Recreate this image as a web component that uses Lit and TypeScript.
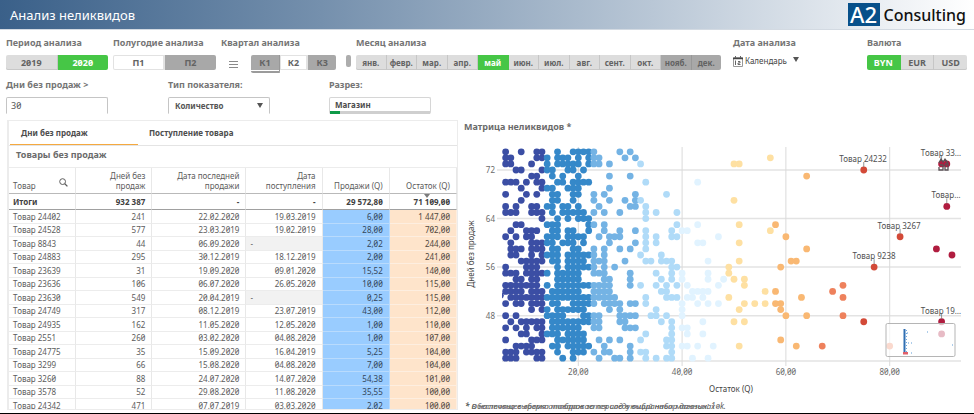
import { LitElement, html, svg, css } from "lit";
import { customElement, state } from "lit/decorators.js";
import { classMap } from "lit/directives/class-map.js";

type Option = { label: string; kind?: string };

const opt = (label: string, kind = "plain"): Option => ({ label, kind });

const YEARS = [opt("2019"), opt("2020", "on")];
const HALVES = [opt("П1", "white"), opt("П2", "dark")];
const QUARTERS = [opt("К1", "dark under"), opt("К2", "white"), opt("К3", "dark")];
const MONTHS = [
  opt("янв."), opt("февр."), opt("мар."), opt("апр."), opt("май", "on"), opt("июн."),
  opt("июл."), opt("авг."), opt("сент."), opt("окт."), opt("нояб.", "dark"), opt("дек.", "dark"),
];
const CURRENCIES = [opt("BYN", "on"), opt("EUR"), opt("USD")];

const ROWS: string[][] = [
  ["Товар 24402", "241", "22.02.2020", "19.03.2019", "6,00", "1 447,00"],
  ["Товар 24528", "577", "23.03.2019", "19.02.2019", "28,00", "702,00"],
  ["Товар 8843", "44", "06.09.2020", "-", "2,02", "244,00"],
  ["Товар 24883", "295", "30.12.2019", "18.12.2019", "2,00", "241,00"],
  ["Товар 23639", "31", "19.09.2020", "09.01.2020", "15,52", "140,00"],
  ["Товар 23636", "106", "06.07.2020", "26.05.2020", "10,00", "115,00"],
  ["Товар 23630", "549", "20.04.2019", "-", "0,25", "115,00"],
  ["Товар 24749", "317", "08.12.2019", "23.07.2019", "43,00", "112,00"],
  ["Товар 24935", "162", "11.05.2020", "12.05.2020", "1,00", "110,00"],
  ["Товар 2551", "260", "03.02.2020", "04.08.2020", "1,00", "107,00"],
  ["Товар 24775", "35", "15.09.2020", "16.04.2019", "5,25", "104,00"],
  ["Товар 3299", "66", "15.08.2020", "04.08.2020", "7,00", "104,00"],
  ["Товар 3260", "88", "24.07.2020", "14.07.2020", "54,38", "101,00"],
  ["Товар 3578", "52", "29.08.2020", "11.08.2020", "35,55", "100,00"],
  ["Товар 24342", "471", "07.07.2019", "03.03.2020", "2,02", "100,00"],
];

// Days without sales -> stock values present on that line.
const POINTS: Record<number, number[]> = {
  75: [6, 9, 12, 13, 16, 19, 20, 21, 22, 23, 28, 30],
  74: [6, 7, 12, 13, 14, 16, 17, 18, 20, 22, 23, 24, 29, 31, 57],
  73: [6, 7, 11, 14, 16, 17, 18, 19, 20, 22, 23, 24, 26, 32, 50, 51, 90, 91],
  72: [8, 9, 13, 14, 15, 18, 19, 21, 75],
  71: [11, 12, 15, 17, 20, 26, 30, 64],
  70: [6, 7, 8, 10, 12, 13, 16, 17, 19, 20, 21, 22, 33, 43],
  69: [9, 13, 14, 15, 18, 19, 20, 26],
  68: [6, 10, 12, 15, 16, 19, 20, 23, 25, 31, 37],
  67: [9, 15, 16, 19, 23, 26, 29, 31, 32, 50],
  66: [6, 8, 11, 12, 14, 15, 17, 18, 20, 24, 30, 31, 33, 91],
  65: [6, 7, 8, 11, 12, 13, 15, 17, 18, 19, 20, 21, 23, 25, 28, 33, 35, 39],
  64: [13, 16, 18, 20, 21, 22, 33],
  63: [8, 9, 14, 15, 16, 22, 23, 25, 39, 43, 51, 58],
  62: [7, 10, 11, 12, 15, 16, 18, 19, 22, 25, 28, 31, 33, 38, 40, 41, 57],
  61: [6, 8, 10, 11, 14, 15, 16, 18, 19, 20, 21, 24, 26, 27, 28, 33, 35, 38, 39, 47, 60, 82],
  60: [7, 11, 12, 13, 14, 15, 17, 18, 19, 21, 26, 31, 33, 35, 43, 44, 51],
  59: [7, 8, 9, 11, 12, 13, 15, 16, 19, 20, 23, 25, 28, 30, 33, 64, 89],
  58: [7, 8, 11, 13, 14, 15, 16, 18, 19, 20, 21, 22, 23, 25, 32, 36, 92],
  57: [9, 10, 11, 12, 13, 15, 16, 18, 19, 20, 21, 23, 24, 25, 29, 33, 34, 36, 37, 38, 45, 51, 61, 62],
  56: [6, 10, 11, 12, 16, 18, 19, 20, 21, 22, 23, 25, 27, 38, 39, 49, 59, 77],
  55: [6, 7, 8, 10, 11, 12, 13, 14, 16, 17, 18, 19, 20, 23, 24, 25, 30, 35, 38, 40, 45, 49],
  54: [8, 9, 11, 12, 16, 17, 18, 19, 20, 25, 26, 30, 36, 38, 40, 45, 48, 50, 52],
  53: [6, 7, 8, 9, 10, 11, 12, 14, 16, 17, 18, 19, 20, 21, 22, 23, 24, 25, 26, 30, 32, 35, 37, 39, 41, 47, 52, 71],
  52: [6, 7, 8, 9, 11, 12, 13, 15, 16, 17, 18, 19, 20, 23, 24, 25, 26, 36, 37, 42, 43, 44, 45, 56, 58, 69],
  51: [7, 8, 9, 10, 11, 12, 13, 14, 15, 16, 17, 18, 19, 20, 21, 22, 23, 24, 25, 26, 27, 33, 37, 38, 39, 41, 42, 44, 49, 63, 71],
  50: [6, 8, 9, 11, 12, 13, 15, 16, 19, 20, 21, 22, 23, 25, 26, 27, 28, 30, 31, 33, 40, 43, 45, 47, 52, 54, 56, 58, 59],
  49: [11, 13, 14, 16, 17, 18, 19, 20, 21, 26, 28, 35, 40, 51, 59],
  48: [6, 8, 14, 15, 16, 17, 21, 22, 23, 24, 28, 29, 30, 31, 34, 35, 37, 40, 60, 64, 71],
  47: [7, 9, 10, 11, 12, 13, 15, 16, 17, 18, 19, 20, 21, 22, 23, 24, 28, 29, 36, 38, 44, 50, 52, 75, 90],
  46: [6, 8, 10, 12, 13, 15, 16, 17, 18, 19, 20, 23, 24, 29, 30, 31, 38, 40, 41],
  45: [9, 10, 13, 14, 15, 16, 18, 19, 20, 21, 33, 38, 41, 44, 90],
  44: [6, 11, 12, 13, 16, 17, 18, 19, 20, 21, 24, 26, 28, 32, 37, 38, 59],
  43: [8, 9, 10, 11, 15, 16, 18, 19, 20, 21, 22, 25, 30, 37, 38, 40, 41, 43, 46, 51, 62, 67, 80],
  42: [6, 7, 8, 10, 11, 12, 13, 16, 19, 20, 21, 23, 25, 26, 30, 32, 33, 38],
  41: [6, 7, 8, 12, 13, 17, 19, 24, 27, 28, 30, 33, 35, 37, 38, 42, 45],
};

const BANDS: [number, string][] = [
  [13, "#3b4ea4"], [22, "#3588c9"], [31, "#74b3e4"], [39, "#b0dbf8"], [48, "#e1f3ff"],
  [57, "#fee0a2"], [66, "#f9b873"], [74, "#ee815c"], [83, "#d34a38"], [999, "#b01c3f"],
];
const bandColor = (v: number) => (v === 80 ? "#ee815c" : v === 75 ? "#d34a38" : BANDS.find(([max]) => v <= max)![1]);

// Plot scales, in chart units.
const px = (v: number) => 118.3 + (v - 20) * 5.19;
const py = (v: number) => 32 + (72 - v) * 6.07;

const CALLOUTS: [string, number, number, number][] = [
  ["Товар 24232", 403, 75, 72], ["Товар 33…", 481, 90, 73], ["Товар…", 486, 91, 66],
  ["Товар 3267", 439, 82, 61], ["Товар 9238", 414, 77, 56], ["Товар 19…", 481, 90, 47],
];

const shared = css`
  :host { display: block; box-sizing: border-box; }
  *, *::before, *::after { box-sizing: border-box; }
  button, input, select { font-family: inherit; font-feature-settings: inherit; margin: 0; border-radius: 0; color: inherit; }
`;

@customElement("segment-bar")
class SegmentBar extends LitElement {
  static properties = { options: { attribute: false }, label: {} };
  declare options: Option[];
  declare label: string;

  static styles = [shared, css`
    :host { font-size: 9px; }
    :host(.small) { font-size: 8px; }
    .bar { display: flex; height: 15px; }
    .seg {
      flex: 1 1 0; min-width: 0; height: 15px; padding: 0; border: 0; border-right: 1px solid #c6c6c6;
      font-size: inherit; line-height: 15px; font-weight: 700; text-align: center; white-space: nowrap;
      background: #dddddd; color: #636363; box-shadow: inset 0 -1px #c8c8c8;
    }
    .seg:first-child { border-radius: 2px 0 0 2px; }
    .seg:last-child { border-radius: 0 2px 2px 0; border-right: 0; }
    .on { background: #46c646; color: #fff; box-shadow: none; border-color: #46c646; }
    .white { background: #fff; box-shadow: inset 0 0 0 1px #e2e2e2; border-color: #e2e2e2; }
    .dark { background: #a8a8a8; box-shadow: none; border-color: #989898; }
    .under { height: 18px; padding-bottom: 1px; border-bottom: 2px solid #9b9b9b; box-shadow: inset 0 -1px #fff; }
  `];

  render() {
    return html`<div class="bar" role="group" aria-label=${this.label}>
      ${this.options.map((o) => html`<button type="button" class="seg ${o.kind ?? ""}">${o.label}</button>`)}
    </div>`;
  }
}

@customElement("stock-table")
class StockTable extends LitElement {
  @state() tab = 0;

  static styles = [shared, css`
    :host { border: 1px solid #ececec; border-left-width: 2px; height: 290px; overflow: hidden; }
    .tabs { display: flex; height: 25px; border-bottom: 1px solid #e4e4e4; padding-left: 1px; }
    .tab {
      flex: 0 0 128px; border: 0; background: none; padding: 0 0 0 11px; text-align: left;
      font-size: 8px; font-weight: 700; line-height: 22px; color: #4d4d4d; white-space: nowrap; border-bottom: 1px solid transparent;
    }
    .tab.active { border-bottom-color: #f5a93f; }
    .title { margin: 0; padding-left: 7px; font-size: 9px; line-height: 18px; height: 21px; font-weight: 700; color: #6b6b6b; }
    table { width: 100%; table-layout: fixed; border-collapse: separate; border-spacing: 0; font-size: 8px; border-top: 1px solid #ececec; }
    th, td { padding: 0 6px 0 4px; line-height: 12px; text-align: right; border-right: 1px solid #e8e8e8; border-bottom: 1px solid #ececec; white-space: nowrap; overflow: hidden; color: #5c5c5c; font-weight: 400; }
    th:first-child, td:first-child { text-align: left; }
    .c1 { width: 15%; } .c2 { width: 17%; } .c3 { width: 21%; } .c4 { width: 17%; } .c5 { width: 15%; } .c6 { width: 15%; }
    .head th { height: 26px; vertical-align: bottom; line-height: 10px; white-space: normal; padding-bottom: 2px; border-bottom-color: #b9b9b9; }
    .headcell { display: flex; justify-content: space-between; align-items: flex-end; }
    .search { border: 0; background: none; padding: 0; height: 17px; width: 10px; display: flex; align-items: center; }
    .search svg { display: block; }
    .total td, .total th { height: 16px; font-weight: 700; color: #404040; border-bottom-color: #a0a0a0; }
    .total th { text-align: left; }
    .total .sorted { position: relative; overflow: visible; }
    .sorted::before { content: ""; position: absolute; left: 34px; top: 0; border: 3px solid transparent; border-top: 4px solid #7b7b7b; border-bottom: 0; }
    .row td { height: 14px; }
    .row:nth-child(odd) td { height: 13px; }
    .row .sales { background: #99ccff; border-color: #b9dbfd; color: #34465a; }
    .row .stock { background: #fee4cb; border-color: #fdeee0; color: #51483f; }
    .row .empty { background: #f2f2f2; text-align: left; }
  `];

  render() {
    const cls = ["", "", "", "", "sales", "stock"];
    return html`
      <div class="tabs" role="tablist">
        ${["Дни без продаж", "Поступление товара"].map((t, i) => html`
          <button type="button" role="tab" aria-selected=${this.tab === i} @click=${() => (this.tab = i)}
            class=${classMap({ tab: true, active: this.tab === i })}>${t}</button>`)}
      </div>
      <h2 class="title">Товары без продаж</h2>
      <table>
        <colgroup><col class="c1" /><col class="c2" /><col class="c3" /><col class="c4" /><col class="c5" /><col class="c6" /></colgroup>
        <thead>
          <tr class="head">
            <th><div class="headcell">Товар
              <button type="button" class="search" aria-label="Поиск"><svg width="9" height="9" viewBox="0 0 9 9" fill="none" stroke="#5d5d5d"><circle cx="3.6" cy="3.6" r="2.9" /><path d="M5.8 5.8 8.4 8.4" stroke-width="1.3" /></svg></button></div></th>
            <th>Дней без<br />продаж</th><th>Дата последней<br />продажи</th><th>Дата<br />поступления</th><th>Продажи (Q)</th><th>Остаток (Q)</th>
          </tr>
        </thead>
        <tbody>
          <tr class="total"><th scope="row">Итоги</th><td>932 387</td><td>-</td><td>-</td><td>29 572,80</td><td class="sorted">71 109,00</td></tr>
          ${ROWS.map((r) => html`<tr class="row">${r.map((c, i) => html`<td class=${c === "-" ? "empty" : cls[i]}>${c}</td>`)}</tr>`)}
        </tbody>
      </table>`;
  }
}

@customElement("stock-chart")
class StockChart extends LitElement {
  static styles = [shared, css`
    .title { margin: 0; padding-left: 4px; font-size: 9px; line-height: 14px; height: 18px; font-weight: 700; color: #6b6b6b; }
    .plot { display: block; width: 100%; height: auto; }
    .grid { stroke: #e3e3e3; stroke-width: 1.5; }
    .vgrid { stroke: #dadada; stroke-width: 1; }
    .tick { font-size: 8px; fill: #6a6a6a; }
    .name { font-size: 8px; fill: #444; }
    .call { font-size: 8px; fill: #505050; }
    .note { display: grid; padding-left: 5px; font-size: 8px; line-height: 12px; font-style: italic; color: #606060; }
    .line { grid-area: 1 / 1; margin: 0; white-space: nowrap; }
  `];

  render() {
    const days = Object.keys(POINTS).map(Number);
    return html`
      <h2 class="title">Матрица неликвидов *</h2>
      <svg class="plot" viewBox="0 0 514 262" role="img" aria-label="Матрица неликвидов">
        ${[72, 64, 56, 48].map((v) => svg`
          <line class="grid" x1="37" x2="501" y1=${py(v)} y2=${py(v)} />
          <text class="tick" x="35" y=${py(v) + 3} text-anchor="end">${v}</text>`)}
        <line class="grid" x1="42" x2="501" y1="223" y2="223" />
        ${[20, 40, 60, 80].map((v) => svg`
          <line class="vgrid" x1=${px(v)} x2=${px(v)} y1="9" y2="228" />
          <text class="tick" x=${px(v)} y="237" text-anchor="middle">${v},00</text>`)}
        ${days.map((d) => POINTS[d].map((v) => svg`<circle cx=${px(v)} cy=${py(d)} r="3.4" fill=${bandColor(v)} />`))}
        <path d="M42 154.500a3.400 3.400 0 0 1 0 6" fill="#3b4ea4" />
        ${CALLOUTS.map(([t, x, v, d]) => svg`
          <line x1=${px(v)} x2=${px(v)} y1=${py(d) - 8} y2=${py(d) - 3} stroke="#777" stroke-width=".8" />
          <text class="call" x=${x} y=${py(d) - 8} text-anchor="middle">${t}</text>`)}
        <path d="M479 25l2-4 2 3 2-3 3 4M480 27h3v5h-4v-3M485 26h3v6h-3v-5" fill="none" stroke="#5a5055" stroke-width="1.300" />
        <rect x="426" y="185.500" width="69" height="33" rx="1.500" fill="#fff" fill-opacity=".7" stroke="#b5b5b5" />
        <path d="M444.500 191v25" stroke="#2f6fb3" stroke-width="2" />
        <path d="M446.500 192v24" stroke="#6fa6dc" stroke-width="1" stroke-dasharray="1 2" />
        <path d="M447 195h1M448 205h1M451 205h1M467 194h1M492 207h1M451 215h1" stroke="#5c9bd6" />
        <rect x="443" y="214" width="5" height="2.500" fill="#e0606a" />
        <text class="name" x="271" y="254" text-anchor="middle">Остаток (Q)</text>
        <text class="name" transform="translate(14 116) rotate(-90)" text-anchor="middle">Дней без продаж</text>
      </svg>
      <div class="note">
        <p class="line">* В настоящее время отображается следующий набор данных: 10k.</p>
        <p class="line">* Обеспечена выборка товаров за период в выбранных магазинах</p>
      </div>`;
  }
}

@customElement("app-root")
class AppRoot extends LitElement {
  static styles = [shared, css`
    :host { font-family: "Noto Sans", "Open Sans", sans-serif; font-feature-settings: "zero"; background: #fff; color: #555; border-bottom: 1px solid #000; min-height: 100vh; overflow: hidden; }
    .top { display: flex; justify-content: space-between; align-items: center; height: 30px; padding: 0 8px 0 10px; border-bottom: 1px solid #d3dae2; background: linear-gradient(90deg, #3a6089 0%, #7590ad 33%, #b9c7d6 67%, #fff 100%); }
    .heading { margin: 0; font-size: 13px; line-height: 28px; font-weight: 400; color: #fff; }
    .logo { display: flex; align-items: center; gap: 4px; color: #111; font-size: 16px; line-height: 24px; font-weight: 500; }
    .mark { width: 32px; height: 23px; background: #07508a; color: #fff; font-size: 22px; line-height: 23px; text-align: center; font-weight: 500; }
    .filters { display: grid; grid-template-columns: 107fr 108fr 135fr 377fr 134fr 100fr; padding: 7px 7px 0 6px; height: 49px; }
    .group { min-width: 0; padding-right: 5px; }
    .group.flush { padding-right: 0; }
    .group.months { padding-right: 12px; }
    .label { display: block; margin: 0; font-size: 9px; line-height: 12px; padding-bottom: 6px; font-weight: 700; color: #757575; white-space: nowrap; }
    .quarters { display: flex; align-items: flex-start; padding-left: 8px; }
    .quarters segment-bar { flex: 1; margin: 0 10px 0 13px; }
    .burger { border: 0; padding: 0; background: none; height: 18px; display: flex; align-items: center; }
    .burger svg { display: block; }
    .thumb { width: 5px; height: 12px; border-radius: 2px; background: #adadad; }
    .calendar { display: flex; align-items: center; gap: 2px; border: 0; background: none; padding: 0; font-size: 8px; line-height: 12px; color: #444; }
    .caret { border: 3px solid transparent; border-top: 5px solid #555; border-bottom: 0; margin: 0 0 3px 4px; }
    .second { display: grid; grid-template-columns: 162fr 161fr 638fr; padding: 0 7px 0 6px; height: 35px; }
    .field { width: 102px; height: 17px; display: block; border: 1px solid #c5c5c5; border-bottom-color: #fff; border-radius: 2px 2px 0 0; background: #fff; padding: 0 4px; font-size: 9px; line-height: 14px; }
    select.field { appearance: none; font-weight: 700; padding-left: 6px; font-size: 8px; }
    .pick { position: relative; width: 102px; }
    .pick .arrow { position: absolute; right: 7px; top: 6px; border: 3px solid transparent; border-top: 5px solid #555; border-bottom: 0; pointer-events: none; }
    .shop { display: block; width: 102px; height: 17px; padding: 0; border: 1px solid #d6d6d6; border-bottom: 0; border-radius: 2px; background: #fff; text-align: left; font-size: 8px; font-weight: 700; line-height: 13px; color: #4d4d4d; }
    .shopname { display: block; height: 13px; padding-left: 5px; }
    .meter { display: block; height: 3px; background: linear-gradient(90deg, #0e9a48 10%, #cfcfcf 10%); }
    .main { display: grid; grid-template-columns: 453fr 514fr; padding-left: 7px; padding-top: 6px; }
    stock-table, stock-chart { min-width: 0; }
    stock-table { margin-right: 2px; }
  `];

  render() {
    return html`
      <header class="top">
        <h1 class="heading">Анализ неликвидов</h1>
        <div class="logo"><span class="mark">A2</span><span>Consulting</span></div>
      </header>
      <section class="filters">
        <div class="group"><span class="label">Период анализа</span><segment-bar label="Период анализа" .options=${YEARS}></segment-bar></div>
        <div class="group"><span class="label">Полугодие анализа</span><segment-bar label="Полугодие анализа" .options=${HALVES}></segment-bar></div>
        <div class="group"><span class="label">Квартал анализа</span>
          <div class="quarters">
            <button type="button" class="burger" aria-label="Меню"><svg width="9" height="9" viewBox="0 0 9 9" stroke="#8a8a8a"><path d="M0 1.500h9M0 4.500h9M0 7.500h9" /></svg></button>
            <segment-bar label="Квартал анализа" .options=${QUARTERS}></segment-bar>
            <span class="thumb"></span>
          </div>
        </div>
        <div class="group months"><span class="label">Месяц анализа</span><segment-bar class="small" label="Месяц анализа" .options=${MONTHS}></segment-bar></div>
        <div class="group"><span class="label">Дата анализа</span>
          <button type="button" class="calendar">
            <svg width="10" height="11" viewBox="0 0 10 11" fill="none" stroke="#666"><path d="M.5 1.500h9v9h-9z" stroke="#999" /><path d="M0 2.500h10" stroke="#444" stroke-width="1.500" /><path d="M2.500 0v2M7.500 0v2M2.500 5v4M2 5h1M5 5.500h2v1.500h-2v1.500h2.500" /></svg>
            Календарь<span class="caret"></span></button>
        </div>
        <div class="group flush"><span class="label">Валюта</span><segment-bar label="Валюта" .options=${CURRENCIES}></segment-bar></div>
      </section>
      <section class="second">
        <div><label class="label" for="days">Дни без продаж &gt;</label><input class="field" id="days" value="30" /></div>
        <div><label class="label" for="kind">Тип показателя:</label>
          <div class="pick"><select class="field" id="kind"><option>Количество</option></select><span class="arrow"></span></div></div>
        <div><span class="label">Разрез:</span>
          <button type="button" class="shop"><span class="shopname">Магазин</span><span class="meter"></span></button></div>
      </section>
      <main class="main"><stock-table></stock-table><stock-chart></stock-chart></main>`;
  }
}
